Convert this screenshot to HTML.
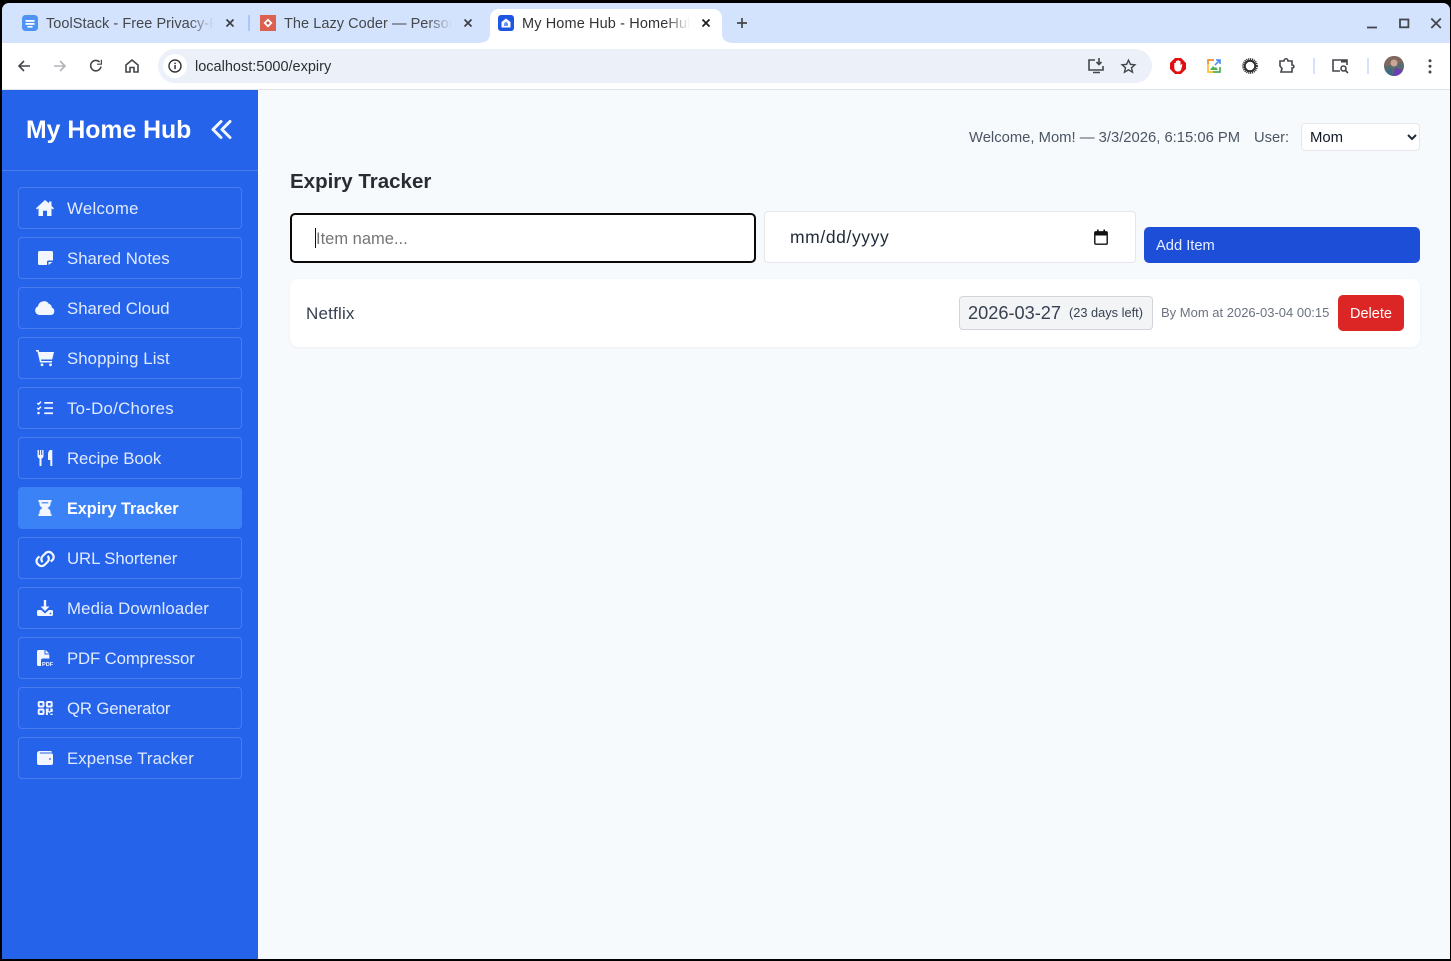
<!DOCTYPE html>
<html lang="en"><head><meta charset="utf-8"><title>My Home Hub - HomeHub</title>
<style>
*{box-sizing:border-box}
html,body{margin:0;padding:0;width:1451px;height:961px;overflow:hidden;background:#000;font-family:"Liberation Sans",sans-serif}
.a{position:absolute}
.t{position:absolute;white-space:nowrap}
svg{position:absolute;overflow:visible}
#page{position:absolute;left:0;top:0;width:1451px;height:961px}
.tab{position:absolute;top:15px;height:18px;font-size:14.5px;line-height:18px;letter-spacing:.05px;color:#45474a;white-space:nowrap;overflow:hidden;-webkit-mask-image:linear-gradient(90deg,#000 85%,transparent);mask-image:linear-gradient(90deg,#000 85%,transparent)}
.nav{position:absolute;left:18px;width:224px;height:42px;border:1px solid rgba(255,255,255,.17);border-radius:4px;color:#dfeaff;font-size:16.8px;line-height:40px}
.nav span{position:absolute;left:48px;top:1px;white-space:nowrap}
.nav svg{left:16px;top:10px;width:20px;height:20px;fill:#f2f6ff}
.nav.on{background:#3b82f6;border-color:#3b82f6;color:#fff;font-weight:700;font-size:16.2px}
</style></head><body>
<div id="page">
<!-- tab strip -->
<div class="a" style="left:2px;top:3px;width:1448px;height:40px;background:#d3e3fd;border-radius:7px 7px 0 0"></div>
<div class="a" style="left:2px;top:43px;width:1448px;height:46px;background:#fff"></div>
<div class="a" style="left:2px;top:89px;width:1448px;height:1px;background:#e1e3e6"></div>

<!-- tab 1 -->
<svg style="left:22px;top:15px" width="16" height="16"><rect width="16" height="16" rx="3.5" fill="#4f93f7"/><rect x="3.5" y="5" width="9" height="1.8" fill="#fff"/><rect x="3.5" y="8" width="9" height="1.8" fill="#fff"/><rect x="5.5" y="11" width="5" height="1.6" fill="#fff"/></svg>
<div class="tab" style="left:46px;width:168px">ToolStack - Free Privacy-First</div>
<svg style="left:226px;top:19px" width="8" height="8"><path d="M.5 .5l7 7M7.500 .5l-7 7" stroke="#3c4043" stroke-width="1.7"/></svg>
<div class="a" style="left:248px;top:15px;width:2px;height:16px;background:#a8c7fa"></div>
<!-- tab 2 -->
<svg style="left:260px;top:15px" width="16" height="16"><rect width="16" height="16" fill="#dc6150"/><path d="M8 3.500L12.500 8 8 12.500 3.500 8z" fill="#fff"/><circle cx="8" cy="8" r="1.500" fill="#c9503f"/></svg>
<div class="tab" style="left:284px;width:168px">The Lazy Coder — Personal Blog</div>
<svg style="left:464px;top:19px" width="8" height="8"><path d="M.5 .5l7 7M7.500 .5l-7 7" stroke="#3c4043" stroke-width="1.7"/></svg>
<!-- active tab -->
<svg style="left:478px;top:9px" width="256" height="34"><path d="M0 34c8 0 12-3 12-10V9c0-5 4-9 9-9h214c5 0 9 4 9 9v15c0 7 4 10 12 10z" fill="#fff"/></svg>
<svg style="left:498px;top:15px" width="16" height="16"><rect width="16" height="16" rx="3" fill="#1d56e0"/><path d="M8 3.500L12.500 7v5.500h-9V7z" fill="#fff"/><path d="M8 6.500l2 2v2.500H6V8.500z" fill="#6d95f0"/></svg>
<div class="tab" style="left:522px;width:168px;color:#303236;letter-spacing:.12px">My Home Hub - HomeHub App</div>
<svg style="left:702px;top:19px" width="8" height="8"><path d="M.5 .5l7 7M7.500 .5l-7 7" stroke="#202124" stroke-width="1.800"/></svg>
<svg style="left:737px;top:18px" width="10" height="10"><path d="M5 0v10M0 5h10" stroke="#44474a" stroke-width="1.7"/></svg>
<!-- window controls -->
<svg style="left:1367px;top:18px" width="76" height="12" fill="none" stroke="#44474a"><path d="M0 9.500h10" stroke-width="1.800"/><rect x="33" y="1.500" width="8.400" height="7.800" stroke-width="1.800"/><path d="M64.300 .5l9.500 9.500M73.800 .5L64.300 10" stroke-width="1.800"/></svg>

<!-- toolbar -->
<svg style="left:17px;top:59px" width="14" height="14" fill="none" stroke="#44474a" stroke-width="1.6"><path d="M13 7H2M7 2L2 7l5 5"/></svg>
<svg style="left:53px;top:59px" width="14" height="14" fill="none" stroke="#b0b3b7" stroke-width="1.6"><path d="M1 7h11M7 2l5 5-5 5"/></svg>
<svg style="left:89px;top:59px" width="14" height="14" fill="none" stroke="#44474a" stroke-width="1.6"><path d="M12 7.500A5.200 5.200 0 1 1 10.600 3"/><path d="M12.400 .8v4.400H8" stroke-width="1.200"/></svg>
<svg style="left:125px;top:59px" width="14" height="14" fill="none" stroke="#44474a" stroke-width="1.6"><path d="M1 6l6-5 6 5v7H9V8.500H5V13H1z"/></svg>
<div class="a" style="left:158px;top:49px;width:994px;height:34px;background:#ebf0f9;border-radius:17px"></div>
<div class="a" style="left:163px;top:54px;width:24px;height:24px;background:#fff;border-radius:50%"></div>
<svg style="left:168px;top:59px" width="14" height="14"><circle cx="7" cy="7" r="6" fill="none" stroke="#303236" stroke-width="1.4"/><rect x="6.300" y="6" width="1.500" height="4.200" fill="#303236"/><rect x="6.300" y="3.600" width="1.500" height="1.500" fill="#303236"/></svg>
<div class="t" style="left:195px;top:58px;font-size:14.5px;line-height:18px;color:#2d2f32">localhost:5000/expiry</div>
<svg style="left:1088px;top:58px" width="17" height="16" fill="none" stroke="#44474a" stroke-width="1.6"><path d="M7 2H1v10h14V8M5 14.500h7"/><path d="M11 0v6M8.500 4l2.500 2.500L13.500 4"/></svg>
<svg style="left:1121px;top:59px" width="15" height="15" fill="none" stroke="#44474a" stroke-width="1.4"><path d="M7.500 1.200l1.900 4.100 4.500.5-3.400 3 1 4.400-4-2.400-4 2.400 1-4.400-3.400-3 4.500-.5z"/></svg>
<svg style="left:1170px;top:58px" width="16" height="16"><path d="M5 0h6l5 5v6l-5 5H5l-5-5V5z" fill="#e00e0e"/><path d="M4.300 5.500a.8.800 0 0 1 1.600 0V3.400a.8.800 0 0 1 1.500 0V2.900a.8.800 0 0 1 1.600 0v.5a.8.800 0 0 1 1.500 0v4.100l.7-1.100c.5-.7 1.500-.2 1.100.6L11 12c-.6 1-1.400 1.500-2.800 1.500-2.400 0-3.900-1.400-3.900-3.800z" fill="#fff"/></svg>
<svg style="left:1207px;top:59px" width="14" height="14" fill="none"><path d="M7 1H1v4" stroke="#f28b2e" stroke-width="1.700"/><path d="M1 5v8h5" stroke="#fbc02d" stroke-width="1.700"/><path d="M6 13h7V8" stroke="#4caf50" stroke-width="1.700"/><path d="M9 1h4v4M13 1L8 6" stroke="#4285f4" stroke-width="1.500"/><path d="M3 11l3-4 2 2 1-1 2 3z" fill="#4caf50"/></svg>
<svg style="left:1242px;top:58px" width="16" height="16" fill="none"><circle cx="8" cy="8" r="6.700" stroke="#333" stroke-width="2.400" stroke-dasharray="1.100 .75"/><circle cx="8" cy="8" r="5.200" stroke="#2b2b2b" stroke-width="1.800"/></svg>
<svg style="left:1279px;top:58px" width="17" height="16" fill="none" stroke="#44474a" stroke-width="1.600"><path d="M1 3h4c0-3 4-3 4 0h4v4c2.500 0 2.500 3 0 3v4H2l1-3.500L1 8z"/></svg>
<div class="a" style="left:1313px;top:58px;width:1.500px;height:16px;background:#d3e3fd"></div>
<svg style="left:1332px;top:58px" width="18" height="17" fill="none" stroke="#44474a" stroke-width="1.600"><path d="M8 13H1V2h14v5"/><rect x="9" y="1.500" width="6" height="3" fill="#44474a" stroke="none"/><circle cx="11.500" cy="10.500" r="2.500"/><path d="M13.500 12.500l2.500 2.500"/></svg>
<div class="a" style="left:1367px;top:58px;width:1.500px;height:16px;background:#d3e3fd"></div>
<svg style="left:1384px;top:56px" width="20" height="20"><circle cx="10" cy="10" r="10" fill="#5a6b70"/><path d="M0 10A10 10 0 0 1 10 0c5 0 8 3 9 6L8 9z" fill="#81685c"/><circle cx="10" cy="7" r="3.500" fill="#c9a796"/><path d="M9 20l2-8 6 1 1.500 2A10 10 0 0 1 10 20z" fill="#6a3fb0"/><path d="M2 15l6-3 1 8a10 10 0 0 1-7-5z" fill="#3c6c85"/></svg>
<svg style="left:1428px;top:59px" width="4" height="15" fill="#44474a"><circle cx="2" cy="1.700" r="1.500"/><circle cx="2" cy="7.300" r="1.500"/><circle cx="2" cy="13" r="1.500"/></svg>

<!-- page area -->
<div class="a" style="left:2px;top:90px;width:1448px;height:869px;background:#f7fafd"></div>
<!-- sidebar -->
<div class="a" style="left:2px;top:90px;width:256px;height:869px;background:#2563eb"></div>
<div class="a" style="left:2px;top:170px;width:256px;height:1px;background:rgba(255,255,255,.17)"></div>
<div class="t" style="left:26px;top:115px;font-size:24.8px;line-height:31px;font-weight:700;color:#fff">My Home Hub</div>
<svg style="left:211px;top:120px" width="22" height="19" fill="none" stroke="#f2f6ff" stroke-width="3" stroke-linecap="round" stroke-linejoin="round"><path d="M10 1.500L2 9.500l8 8M19 1.500l-8 8 8 8"/></svg>

<div class="nav" style="top:187px"><svg viewBox="0 0 20 20"><path d="M10 2L1 10.300l1 1.200 1.500-1.300V18h4.500v-5.300h4V18h4.500v-7.800l1.500 1.300 1-1.200-2.500-2.300V3.500H14v1.800z"/></svg><span style="letter-spacing:.3px">Welcome</span></div>
<div class="nav" style="top:237px"><svg viewBox="0 0 20 20"><path d="M4.500 3h12a1.500 1.500 0 0 1 1.500 1.500V12.500h-4.500a1.500 1.500 0 0 0-1.500 1.500V17H4.500A1.500 1.500 0 0 1 3 15.500v-11A1.500 1.500 0 0 1 4.500 3z"/><path d="M13.500 14h4l-4 3z"/></svg><span>Shared Notes</span></div>
<div class="nav" style="top:287px"><svg viewBox="0 0 20 20"><path d="M4.500 17A4.500 4.500 0 0 1 3 8.300 6 6 0 0 1 14 6a3.200 3.200 0 0 1 2.700 3.500A3.900 3.900 0 0 1 16.200 17z"/></svg><span>Shared Cloud</span></div>
<div class="nav" style="top:337px"><svg viewBox="0 0 20 20"><path d="M1 2h2.700l.5 2H19l-1.800 7.500H6l.4 1.500H17v1.500H5L2.500 3.500H1z"/><circle cx="7" cy="16.800" r="1.400"/><circle cx="15.500" cy="16.800" r="1.400"/></svg><span style="letter-spacing:.08px">Shopping List</span></div>
<div class="nav" style="top:387px"><svg viewBox="0 0 20 20"><path d="M9.300 4h8.700v1.700H9.300zM9.300 9.200h8.700v1.700H9.300zM9.300 14.400h8.700v1.700H9.300z"/><path d="M2.300 5l1.200 1.200L6 3.700" fill="none" stroke="#f2f6ff" stroke-width="1.500"/><path d="M2.300 10l1.200 1.200L6 8.700" fill="none" stroke="#f2f6ff" stroke-width="1.500"/><circle cx="3.500" cy="15" r="1.300"/></svg><span style="letter-spacing:.28px">To-Do/Chores</span></div>
<div class="nav" style="top:437px"><svg viewBox="0 0 20 20"><path d="M3 2h1.200v5h1V2h1.300v5h1V2h1.300v6c0 1.500-1 2.300-2 2.600V18h-2v-7.400c-1-.3-2-1.100-2-2.600V2z" transform="translate(-.3 0)"/><path d="M15.500 2H17.300v16h-2v-6H13V7c0-3 1-5 2.500-5z"/></svg><span style="letter-spacing:-.09px">Recipe Book</span></div>
<div class="nav on" style="top:487px"><svg viewBox="0 0 20 20"><path d="M3.500 2h13v2.200h-1V6c0 2-1.500 3-3 4 1.500 1 3 2 3 4v1.800h1V18h-13v-2.200h1V14c0-2 1.500-3 3-4-1.500-1-3-2-3-4V4.200h-1z"/><path d="M6.700 4.200v1.200h6.600V4.200z" fill="#3b82f6"/></svg><span>Expiry Tracker</span></div>
<div class="nav" style="top:537px"><svg viewBox="0 0 20 20" style="fill:none;stroke:#f2f6ff;stroke-width:1.800"><g transform="translate(-2.400 -1.500) scale(1.250)"><path d="M8 12.500a3.400 3.400 0 0 1 0-4.800l2.300-2.300a3.500 3.500 0 0 1 5 0l.5.500a3.500 3.500 0 0 1 0 5L14.500 12"/><path d="M12 7.500a3.400 3.400 0 0 1 0 4.800l-2.300 2.300a3.500 3.500 0 0 1-5 0l-.5-.5a3.500 3.500 0 0 1 0-5L5.500 8"/></g></svg><span style="letter-spacing:-.08px">URL Shortener</span></div>
<div class="nav" style="top:587px"><svg viewBox="0 0 20 20"><path d="M8.800 2h2.400v6.500h3.300L10 13 5.500 8.500h3.300z"/><path d="M3.500 12H6.200L10 15.500 13.800 12h2.700a1.500 1.500 0 0 1 1.500 1.500v3a1.500 1.500 0 0 1-1.500 1.500h-13A1.500 1.500 0 0 1 2 16.500v-3A1.500 1.500 0 0 1 3.500 12z"/><circle cx="15.500" cy="15.500" r=".9" fill="#2563eb"/></svg><span style="letter-spacing:.13px">Media Downloader</span></div>
<div class="nav" style="top:637px"><svg viewBox="0 0 20 20"><path d="M3.500 2H9.500v4.500H14.300v4H8a2 2 0 0 0-2 2V18H3.500A1.500 1.500 0 0 1 2 16.500v-13A1.500 1.500 0 0 1 3.500 2z"/><path d="M10.500 2l3.800 3.500h-3.800z"/><text x="7" y="17.800" font-family="Liberation Sans,sans-serif" font-size="5.600" font-weight="700" fill="#f2f6ff">PDF</text></svg><span style="letter-spacing:-.14px">PDF Compressor</span></div>
<div class="nav" style="top:687px"><svg viewBox="0 0 20 20"><g fill="none" stroke="#f2f6ff" stroke-width="2"><rect x="3.700" y="4" width="4.800" height="4.500" rx="1"/><rect x="11.900" y="4" width="4.800" height="4.500" rx="1"/><rect x="3.700" y="11.500" width="4.800" height="4.500" rx="1"/></g><path d="M10.900 10.500h2.800v2.800h1.600v-2.800h2.400v3.500h-2.400v1h-1.600v-1h-.8V17h-2zM15.300 15.600h2.400V17h-2.400z"/></svg><span style="letter-spacing:-.17px">QR Generator</span></div>
<div class="nav" style="top:737px"><svg viewBox="0 0 20 20"><path d="M4.500 3H15.500a1.500 1.500 0 0 1 1.500 1.500H4.800v1H16.500A1.500 1.500 0 0 1 18 7v8a2 2 0 0 1-2 2H4a2 2 0 0 1-2-2V5.500A2.500 2.500 0 0 1 4.500 3z"/><circle cx="15" cy="11" r=".9" fill="#2563eb"/></svg><span style="letter-spacing:.07px">Expense Tracker</span></div>

<!-- header -->
<div class="t" style="left:969px;top:129px;font-size:14.8px;line-height:18px;color:#4b5563">Welcome, Mom! — 3/3/2026, 6:15:06 PM</div>
<div class="t" style="left:1254px;top:129px;font-size:14.7px;line-height:18px;color:#4b5563">User:</div>
<div class="a" style="left:1301px;top:123px;width:119px;height:28px;background:#fff;border:1px solid #e5e7eb;border-radius:4px"></div>
<div class="t" style="left:1310px;top:129px;font-size:14.9px;line-height:18px;color:#111827">Mom</div>
<svg style="left:1407px;top:134px" width="10" height="7" fill="none" stroke="#1f2937" stroke-width="2"><path d="M1 1l4 4 4-4"/></svg>

<div class="t" style="left:290px;top:169px;font-size:20.5px;line-height:26px;font-weight:700;color:#292d33">Expiry Tracker</div>

<!-- form -->
<div class="a" style="left:290px;top:213px;width:466px;height:50px;background:#fff;border:2px solid #0a0a0a;border-radius:5px"></div>
<div class="a" style="left:315px;top:228px;width:1px;height:20px;background:#111"></div>
<div class="t" style="left:316px;top:229px;font-size:16.500px;line-height:20px;color:#757575">Item name...</div>
<div class="a" style="left:764px;top:211px;width:372px;height:52px;background:#fff;border:1px solid #e5e7eb;border-radius:4px"></div>
<div class="t" style="left:790px;top:227px;font-size:17.500px;line-height:21px;letter-spacing:.6px;color:#1f2937">mm/dd/yyyy</div>
<svg style="left:1094px;top:229px" width="14" height="16"><rect x=".8" y="2.800" width="12.400" height="12.400" rx="1" fill="#fff" stroke="#111" stroke-width="1.400"/><rect x="1" y="3" width="12" height="3.500" fill="#111"/><rect x="3" y="0.500" width="1.600" height="3" fill="#111"/><rect x="9.400" y="0.500" width="1.600" height="3" fill="#111"/></svg>
<div class="a" style="left:1144px;top:227px;width:276px;height:36px;background:#1d4ed8;border-radius:5px"></div>
<div class="t" style="left:1156px;top:237px;font-size:14.700px;line-height:18px;color:#e8efff">Add Item</div>

<!-- card -->
<div class="a" style="left:290px;top:279px;width:1130px;height:68px;background:#fff;border-radius:8px;box-shadow:0 1px 3px rgba(0,0,0,.05)"></div>
<div class="t" style="left:306px;top:304px;font-size:17px;line-height:19px;letter-spacing:.2px;color:#374151">Netflix</div>
<div class="a" style="left:959px;top:296px;width:194px;height:34px;background:#f3f4f6;border:1px solid #d1d5db;border-radius:4px"></div>
<div class="t" style="left:968px;top:302px;font-size:18.200px;line-height:22px;color:#374151">2026-03-27</div>
<div class="t" style="left:1069px;top:305px;font-size:12.800px;line-height:15px;color:#374151">(23 days left)</div>
<div class="t" style="left:1161px;top:305px;font-size:13px;line-height:15px;color:#6b7280">By Mom at 2026-03-04 00:15</div>
<div class="a" style="left:1338px;top:295px;width:66px;height:36px;background:#dc2626;border-radius:5px"></div>
<div class="t" style="left:1350px;top:305px;font-size:14.500px;line-height:18px;color:#fff">Delete</div>
</div>
</body></html>
